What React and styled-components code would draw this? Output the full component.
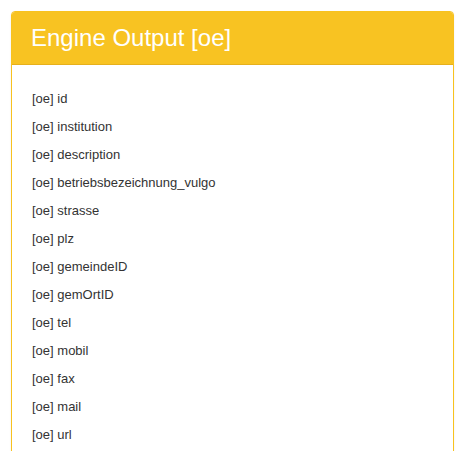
import React from 'react';
import styled, { createGlobalStyle } from 'styled-components';

const GlobalStyle = createGlobalStyle`
  body {
    margin: 0;
    background: #fff;
    font-family: "Liberation Sans", Arial, sans-serif;
  }
`;

const Page = styled.div`
  padding: 11px 11px 0 11px;
  width: 465px;
  box-sizing: border-box;
`;

const Panel = styled.div`
  border: 1px solid #f8c21f;
  border-radius: 4px;
  background: #fff;
  box-shadow: 0 1px 2px rgba(0, 0, 0, 0.08);
  width: 443px;
  box-sizing: border-box;
`;

const Heading = styled.div`
  background: #f8c322;
  border-bottom: 1px solid #e6b01c;
  border-radius: 3px 3px 0 0;
  padding: 13px 19px 13px 19px;
`;

const Title = styled.h3`
  margin: 0;
  font-size: 24px;
  line-height: 26px;
  font-weight: 400;
  color: #fff;
`;

const Body = styled.div`
  padding: 24px 20px 10px 20px;
`;

const Item = styled.div`
  font-size: 13px;
  line-height: 20px;
  color: #333;
  margin-bottom: 8px;
`;

const fields = [
  'id',
  'institution',
  'description',
  'betriebsbezeichnung_vulgo',
  'strasse',
  'plz',
  'gemeindeID',
  'gemOrtID',
  'tel',
  'mobil',
  'fax',
  'mail',
  'url',
];

export default function App() {
  return (
    <>
      <GlobalStyle />
      <Page>
        <Panel>
          <Heading>
            <Title>Engine Output [oe]</Title>
          </Heading>
          <Body>
            {fields.map((f) => (
              <Item key={f}>[oe] {f}</Item>
            ))}
          </Body>
        </Panel>
      </Page>
    </>
  );
}
